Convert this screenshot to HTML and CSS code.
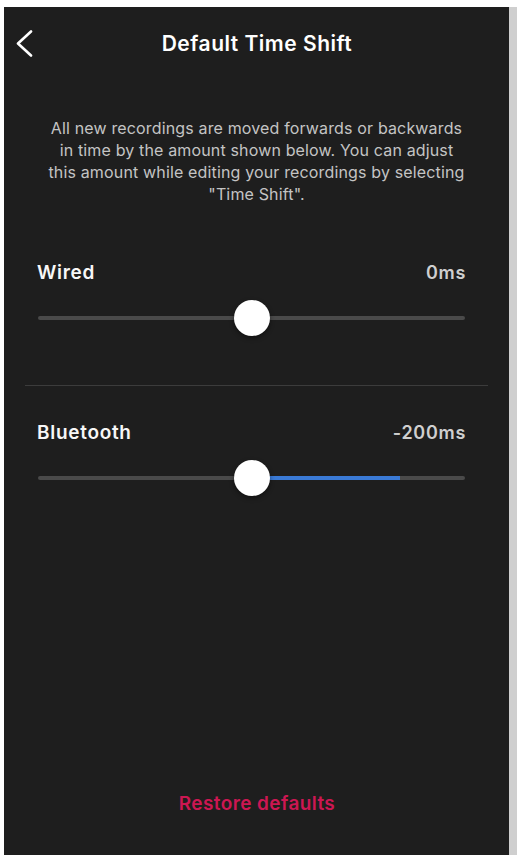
FILE: index.html
```html
<!DOCTYPE html>
<html lang="en">
<head>
<meta charset="utf-8">
<title>Default Time Shift</title>
<link rel="stylesheet" href="styles.css">
</head>
<body>
<div class="frame">
  <main class="panel">
    <header class="header">
      <button class="back" aria-label="Back">
        <svg width="18" height="27" viewBox="0 0 18 27"><path d="M16 1.5 L3 13.5 L16 25.5" fill="none" stroke="#fff" stroke-width="2.6" stroke-linecap="round" stroke-linejoin="round"/></svg>
      </button>
      <h1 class="title">Default Time Shift</h1>
      <span></span>
    </header>
    <p class="desc">All new recordings are moved forwards or backwards<br>in time by the amount shown below. You can adjust<br>this amount while editing your recordings by selecting<br>"Time Shift".</p>

    <section class="setting first">
      <div class="row">
        <span class="label">Wired</span>
        <span class="value">0ms</span>
      </div>
      <div class="slider">
        <div class="track"></div>
        <div class="thumb" style="left:50%"></div>
      </div>
    </section>

    <hr class="divider">

    <section class="setting">
      <div class="row">
        <span class="label">Bluetooth</span>
        <span class="value">-200ms</span>
      </div>
      <div class="slider">
        <div class="track"><div class="fill" style="left:50%;width:34.7%"></div></div>
        <div class="thumb" style="left:50%"></div>
      </div>
    </section>

    <div class="footer">
      <button class="restore">Restore defaults</button>
    </div>
  </main>
  <div class="strip"></div>
</div>
</body>
</html>
```
FILE: styles.css
```css
* { box-sizing: border-box; }
html, body { margin: 0; padding: 0; background: #ffffff; }
body {
  font-family: Inter, "Noto Sans", "Liberation Sans", sans-serif;
  padding: 7px 0 0 4px;
  width: 517px;
  height: 862px;
  overflow: hidden;
}
.frame {
  display: flex;
  height: 848px;
}
.panel {
  width: 505px;
  height: 848px;
  background: #1e1e1e;
  display: flex;
  flex-direction: column;
}
.strip {
  width: 8px;
  background: #cfcfcf;
}
.header {
  height: 72px;
  display: grid;
  grid-template-columns: 1fr auto 1fr;
  align-items: center;
}
.back {
  justify-self: start;
  background: none;
  border: 0;
  padding: 0;
  margin-left: 11px;
  width: 18px;
  height: 27px;
  display: flex;
  cursor: pointer;
}
.title {
  margin: 0;
  color: #ffffff;
  font-size: 21px;
  font-weight: 600;
  letter-spacing: 0.5px;
  transform: translateX(0.5px);
}
.desc {
  margin: 38px 0 0;
  text-align: center;
  color: #c4c4c4;
  font-size: 16px;
  line-height: 22px;
  font-weight: 400;
  letter-spacing: 0.15px;
}
.setting {
  padding: 0 44px 0 33px;
  margin-top: 34px;
}
.setting.first { margin-top: 55px; }
.row {
  height: 24px;
  display: flex;
  justify-content: space-between;
  align-items: center;
}
.label {
  color: #f7f7f7;
  font-size: 19px;
  font-weight: 600;
  letter-spacing: 0.7px;
}
.value {
  color: #cfcfcf;
  font-size: 18px;
  font-weight: 600;
  letter-spacing: 0.7px;
  margin-right: -1px;
}
.slider {
  position: relative;
  height: 36px;
  margin-top: 16px;
  margin-left: 1px;
}
.track {
  position: absolute;
  left: 0;
  right: 0;
  top: 16px;
  height: 4px;
  border-radius: 2px;
  background: #4a4a4a;
}
.fill {
  position: absolute;
  top: 0;
  bottom: 0;
  background: #3a7ad6;
}
.thumb {
  position: absolute;
  top: 0;
  width: 36px;
  height: 36px;
  margin-left: -18px;
  border-radius: 50%;
  background: #ffffff;
  box-shadow: 0 2px 5px rgba(0,0,0,0.45);
}
.divider {
  margin: 49px 21px 0;
  border: 0;
  height: 1px;
  background: #3c3c3c;
}
.footer {
  margin-top: auto;
  padding-bottom: 39px;
  display: flex;
  justify-content: center;
}
.restore {
  background: none;
  border: 0;
  padding: 0;
  color: #cc1752;
  font-family: inherit;
  font-size: 19px;
  font-weight: 600;
  letter-spacing: 0.4px;
  line-height: 24px;
  transform: translateX(0.5px);
  cursor: pointer;
}
```
